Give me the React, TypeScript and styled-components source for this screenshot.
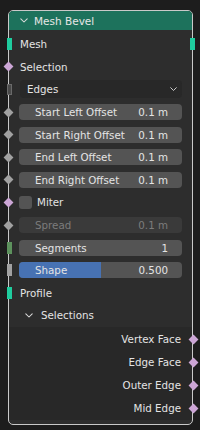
import styled, { createGlobalStyle } from "styled-components";

const GlobalStyle = createGlobalStyle`
  html, body {
    margin: 0;
    padding: 0;
    background: #1d1d1d;
  }
  body {
    font-family: "DejaVu Sans", Inter, sans-serif;
    -webkit-font-smoothing: antialiased;
  }
`;

type SocketKind = "geo" | "bool" | "float" | "menu" | "int" | "floatRect";

const socketColors: Record<SocketKind, string> = {
  geo: "#1fcc9e",
  bool: "#cca6d6",
  float: "#a1a1a1",
  menu: "#4a4a4a",
  int: "#5d925d",
  floatRect: "#a1a1a1",
};

const Page = styled.div`
  width: 200px;
  height: 430px;
  padding: 10px 0 0 8px;
  box-sizing: border-box;
`;

const Node = styled.div`
  width: 185px;
  box-sizing: border-box;
  border: 1px solid #c9c9c9;
  border-radius: 5px;
  background: #2d2d2d;
  padding-bottom: 4px;
`;

const Header = styled.div`
  height: 19px;
  background: #1d725c;
  border-radius: 4px 4px 0 0;
  display: flex;
  align-items: center;
  gap: 6px;
  padding-left: 11px;
  color: #e6e6e6;
  font-size: 10.5px;
`;

const Body = styled.div`
  padding-top: 3px;
`;

const Row = styled.div<{ $out?: boolean; $indent?: number }>`
  position: relative;
  height: 22.6px;
  display: flex;
  align-items: center;
  justify-content: ${(p) => (p.$out ? "flex-end" : "flex-start")};
  padding: 0 ${(p) => (p.$out ? 11 : 10)}px 0 ${(p) => p.$indent ?? 10}px;
  color: #e4e4e4;
  font-size: 10.3px;
`;

const Socket = styled.span<{ $kind: SocketKind; $out?: boolean }>`
  position: absolute;
  top: 50%;
  ${(p) => (p.$out ? "right: -6px;" : "left: -6px;")}
  box-sizing: border-box;
  background: ${(p) => socketColors[p.$kind]};
  ${(p) =>
    p.$kind === "bool" || p.$kind === "float"
      ? `
    width: 7px;
    height: 7px;
    margin-top: -3.5px;
    margin-left: 1.5px;
    margin-right: 1.5px;
    transform: rotate(45deg);
  `
      : `
    width: 5px;
    height: 12px;
    margin-top: -6px;
    margin-left: 3.5px;
    margin-right: 3.5px;
    ${p.$kind === "menu" ? "border: 1px solid #6a6a6a; width: 5px; height: 11px; margin-top: -5.5px;" : ""}
  `}
`;

const Field = styled.div<{ $disabled?: boolean }>`
  flex: 1;
  height: 16px;
  border-radius: 4px;
  background: ${(p) => (p.$disabled ? "#3a3a3a" : "#545454")};
  color: ${(p) => (p.$disabled ? "#7c7c7c" : "#e4e4e4")};
  display: flex;
  align-items: center;
  justify-content: space-between;
  padding: 0 14px 0 16px;
  position: relative;
  overflow: hidden;
`;

const Fill = styled.div`
  position: absolute;
  left: 0;
  top: 0;
  bottom: 0;
  background: #4772b3;
`;

const FieldText = styled.span`
  position: relative;
`;

const Dropdown = styled.div`
  flex: 1;
  height: 18px;
  margin-left: 1px;
  border-radius: 4px;
  background: #282828;
  display: flex;
  align-items: center;
  justify-content: space-between;
  padding: 0 5px 0 7px;
  color: #e4e4e4;
`;

const Check = styled.span`
  width: 13px;
  height: 13px;
  border-radius: 3px;
  background: #545454;
  margin-right: 5px;
`;

const PanelHeader = styled(Row)`
  gap: 8px;
  padding-left: 16px;
`;

const PanelBody = styled.div`
  background: #282828;
  padding-top: 1px;
`;

const OutRow = styled(Row)`
  height: 23px;
`;

const Chevron = ({ size = 8 }: { size?: number }) => (
  <svg width={size} height={size * 0.6} viewBox="0 0 10 6">
    <polyline
      points="1,1 5,5 9,1"
      fill="none"
      stroke="#dcdcdc"
      strokeWidth="1.3"
      strokeLinecap="round"
      strokeLinejoin="round"
    />
  </svg>
);

const offsets = [
  "Start Left Offset",
  "Start Right Offset",
  "End Left Offset",
  "End Right Offset",
];

const outputs = ["Vertex Face", "Edge Face", "Outer Edge", "Mid Edge"];

export default function App() {
  return (
    <Page>
      <GlobalStyle />
      <Node>
        <Header>
          <Chevron />
          <span>Mesh Bevel</span>
        </Header>
        <Body>
          <Row $indent={11}>
            <Socket $kind="geo" />
            Mesh
            <Socket $kind="geo" $out />
          </Row>
          <Row $indent={11}>
            <Socket $kind="bool" />
            Selection
          </Row>
          <Row>
            <Socket $kind="menu" />
            <Dropdown>
              <span>Edges</span>
              <Chevron size={7} />
            </Dropdown>
          </Row>
          {offsets.map((o) => (
            <Row key={o}>
              <Socket $kind="float" />
              <Field>
                <span>{o}</span>
                <span>0.1 m</span>
              </Field>
            </Row>
          ))}
          <Row>
            <Socket $kind="bool" />
            <Check />
            Miter
          </Row>
          <Row>
            <Socket $kind="float" />
            <Field $disabled>
              <span>Spread</span>
              <span>0.1 m</span>
            </Field>
          </Row>
          <Row>
            <Socket $kind="int" />
            <Field>
              <span>Segments</span>
              <span>1</span>
            </Field>
          </Row>
          <Row>
            <Socket $kind="floatRect" />
            <Field>
              <Fill style={{ width: `${0.5 * 100}%` }} />
              <FieldText>Shape</FieldText>
              <FieldText>0.500</FieldText>
            </Field>
          </Row>
          <Row $indent={11}>
            <Socket $kind="geo" />
            Profile
          </Row>
          <PanelHeader>
            <Chevron />
            <span>Selections</span>
          </PanelHeader>
          <PanelBody>
            {outputs.map((o) => (
              <OutRow key={o} $out>
                {o}
                <Socket $kind="bool" $out />
              </OutRow>
            ))}
          </PanelBody>
        </Body>
      </Node>
    </Page>
  );
}
